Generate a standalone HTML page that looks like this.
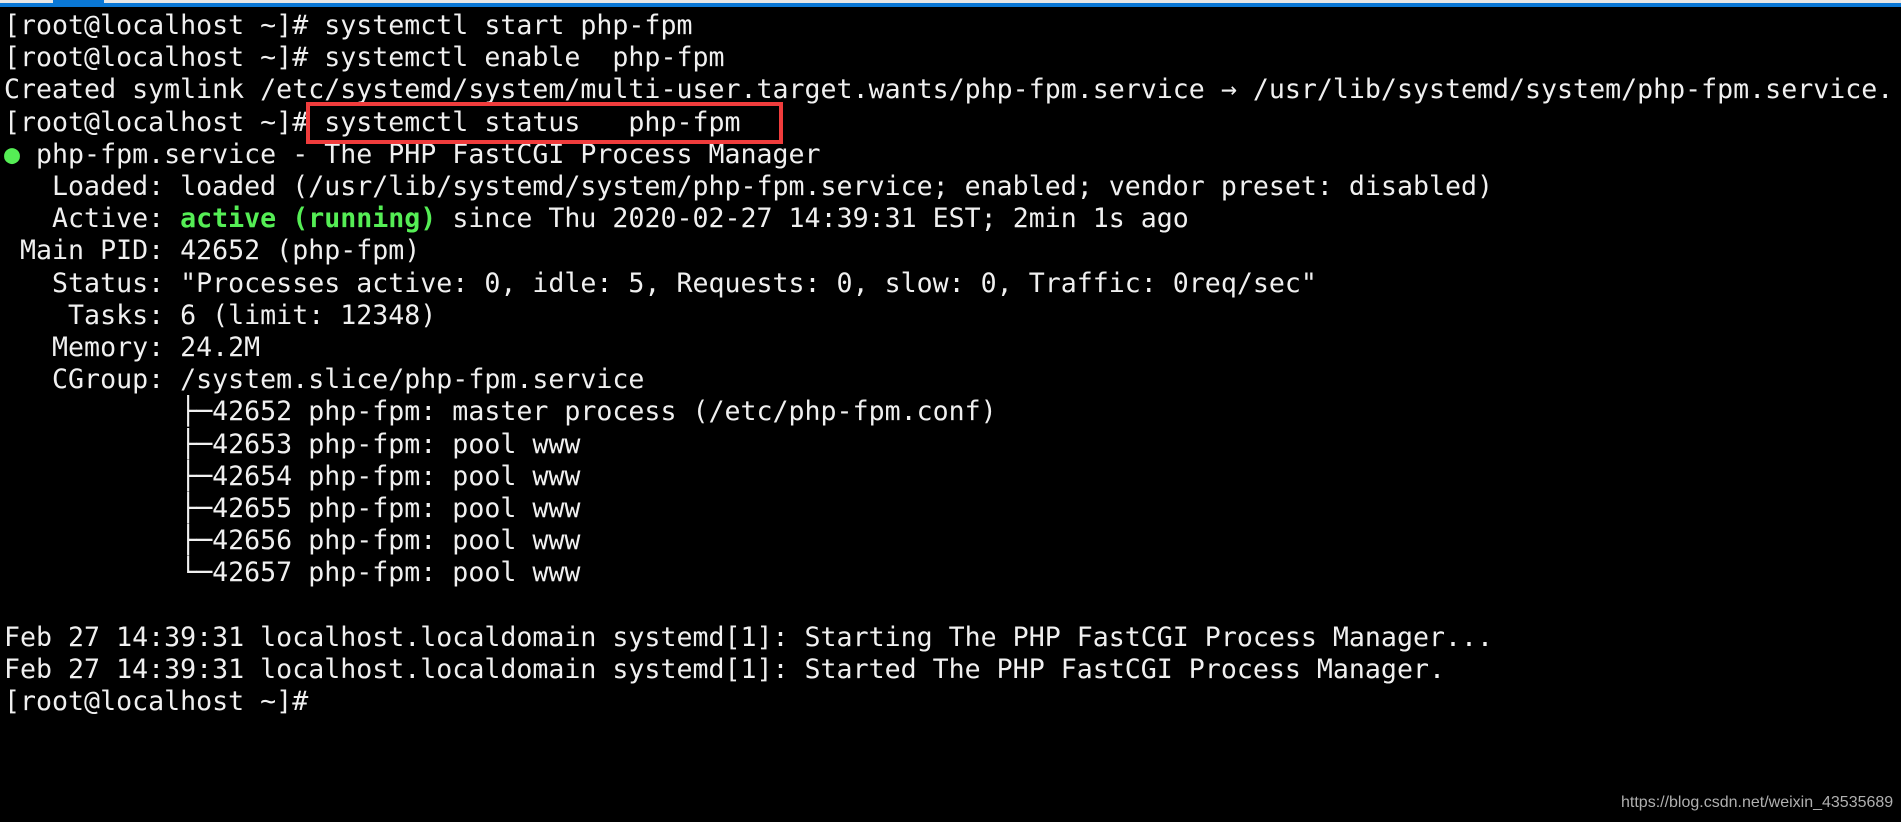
<!DOCTYPE html>
<html><head><meta charset="utf-8"><style>
html,body{margin:0;padding:0;width:1901px;height:822px;overflow:hidden;background:#000;}
.top{position:absolute;left:0;top:0;width:1901px;height:3px;background:#e8e8e8;}
.seg{position:absolute;left:53px;top:0;width:51px;height:3px;background:#0a78d6;}
.blue{position:absolute;left:0;top:3px;width:1901px;height:4px;background:#0a78d6;}
pre{position:absolute;left:4px;top:10px;margin:0;font-family:"DejaVu Sans Mono","Liberation Mono",monospace;font-size:26.6px;line-height:32.2px;color:#f0f0f0;}
.g{color:#55ee55;}
.b{color:#55ee55;font-weight:bold;}
.box{position:absolute;left:306px;top:102px;width:469px;height:34px;border:4px solid #f03c3c;}
.wm{position:absolute;left:1621px;top:794px;font-family:"Liberation Sans",Arial,sans-serif;font-size:16px;color:#b0b0b0;}
</style></head><body>
<div class="top"></div><div class="seg"></div><div class="blue"></div>
<pre>[root@localhost ~]# systemctl start php-fpm
[root@localhost ~]# systemctl enable  php-fpm
Created symlink /etc/systemd/system/multi-user.target.wants/php-fpm.service → /usr/lib/systemd/system/php-fpm.service.
[root@localhost ~]# systemctl status   php-fpm
<span class="g">●</span> php-fpm.service - The PHP FastCGI Process Manager
   Loaded: loaded (/usr/lib/systemd/system/php-fpm.service; enabled; vendor preset: disabled)
   Active: <span class="b">active (running)</span> since Thu 2020-02-27 14:39:31 EST; 2min 1s ago
 Main PID: 42652 (php-fpm)
   Status: "Processes active: 0, idle: 5, Requests: 0, slow: 0, Traffic: 0req/sec"
    Tasks: 6 (limit: 12348)
   Memory: 24.2M
   CGroup: /system.slice/php-fpm.service
           ├─42652 php-fpm: master process (/etc/php-fpm.conf)
           ├─42653 php-fpm: pool www
           ├─42654 php-fpm: pool www
           ├─42655 php-fpm: pool www
           ├─42656 php-fpm: pool www
           └─42657 php-fpm: pool www

Feb 27 14:39:31 localhost.localdomain systemd[1]: Starting The PHP FastCGI Process Manager...
Feb 27 14:39:31 localhost.localdomain systemd[1]: Started The PHP FastCGI Process Manager.
[root@localhost ~]#</pre>
<div class="box"></div>
<div class="wm">https://blog.csdn.net/weixin_43535689</div>
</body></html>
